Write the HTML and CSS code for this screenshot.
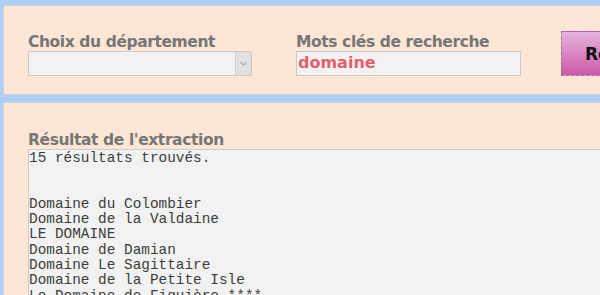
FILE: index.html
```html
<!DOCTYPE html>
<html lang="fr">
<head>
    <meta charset="UTF-8">
    <title>Extraction</title>
    <link rel="stylesheet" href="styles.css">
</head>
<body>
    <!-- Search panel -->
    <div class="panel search-panel">
        <div class="field">
            <label class="label">Choix du département</label>
            <div class="select-box">
                <span class="select-value"></span>
                <span class="select-arrow">
                    <svg width="7" height="5" viewBox="0 0 7 5"><path d="M0.5 1 L3.5 4 L6.5 1" fill="none" stroke="#8a8a8a" stroke-width="1"/></svg>
                </span>
            </div>
        </div>
        <div class="field field-keywords">
            <label class="label">Mots clés de recherche</label>
            <div class="text-box">domaine</div>
        </div>
        <button class="search-button"><span class="search-text">Rechercher</span></button>
    </div>

    <!-- Results panel -->
    <div class="panel result-panel">
        <label class="label">Résultat de l'extraction</label>
        <pre class="result-box">15 résultats trouvés.


Domaine du Colombier
Domaine de la Valdaine
LE DOMAINE
Domaine de Damian
Domaine Le Sagittaire
Domaine de la Petite Isle
Le Domaine de Figuière ****</pre>
    </div>
</body>
</html>
```

FILE: styles.css
```css
html, body {
    height: 295px;
    overflow: hidden;
}

body {
    margin: 0;
    padding: 5px 0 0 3px;
    background: #aed0f8;
    box-sizing: border-box;
}

.panel {
    background: #fde6d5;
    border: 1px solid #d2d2d2;
    border-right: none;
}

.search-panel {
    height: 90px;
    display: flex;
    align-items: flex-start;
    padding: 0 0 0 24px;
    box-sizing: border-box;
    overflow: hidden;
}

.field {
    display: flex;
    flex-direction: column;
    flex-shrink: 0;
    margin-top: 27px;
    width: 224px;
}

.field-keywords {
    margin-left: 44px;
    width: 225px;
}

.label {
    display: block;
    white-space: nowrap;
    font-family: "DejaVu Sans", sans-serif;
    font-weight: bold;
    font-size: 15.5px;
    letter-spacing: -0.4px;
    line-height: 18px;
    color: #767676;
}

.select-box {
    height: 25px;
    box-sizing: border-box;
    border: 1px solid #c9c9c9;
    background: #f2f2f2;
    display: flex;
}

.select-value {
    flex: 1;
}

.select-arrow {
    width: 15px;
    background: #e1e1e1;
    border-left: 1px solid #cfcfcf;
    display: flex;
    align-items: center;
    justify-content: center;
}

.text-box {
    height: 25px;
    box-sizing: border-box;
    border: 1px solid #c9c9c9;
    background: #f2f2f2;
    font-family: "DejaVu Sans", sans-serif;
    font-weight: bold;
    font-size: 16px;
    line-height: 22px;
    color: #e4606c;
    padding-left: 1px;
}

.search-button {
    margin: 25px 0 0 40px;
    width: 160px;
    height: 45px;
    flex-shrink: 0;
    border: 1px dashed #a46aa0;
    background: linear-gradient(#e4b3dd, #cb5aa6);
    display: flex;
    align-items: center;
    padding: 0 0 0 23px;
}

.search-text {
    font-family: "DejaVu Sans", sans-serif;
    font-weight: bold;
    font-size: 17px;
    color: #111;
}

.result-panel {
    margin-top: 7px;
    height: 200px;
    padding: 28px 0 0 24px;
    box-sizing: border-box;
    overflow: hidden;
}

.result-box {
    margin: 0;
    background: #f2f2f2;
    border-top: 1px solid #cbcbcb;
    border-left: 1px solid #cbcbcb;
    font-family: "Liberation Mono", monospace;
    font-size: 14.4px;
    line-height: 15.3px;
    color: #3c3c3c;
    padding: 1px 0 0 0;
    height: 200px;
}
```
